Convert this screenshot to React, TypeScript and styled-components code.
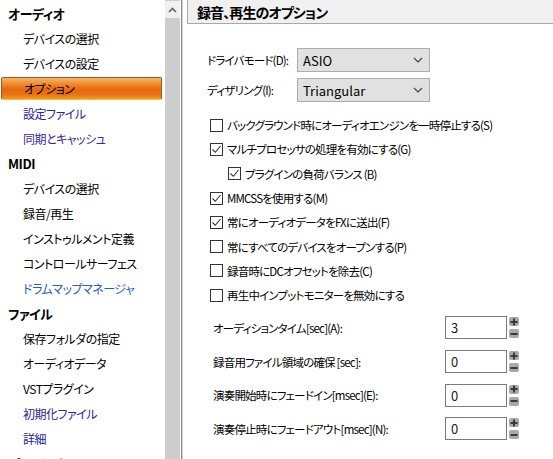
import React from 'react';
import styled, { createGlobalStyle, css } from 'styled-components';

const GlobalStyle = createGlobalStyle`
  html, body {
    margin: 0;
    padding: 0;
    background: #ffffff;
  }
  body {
    font-family: 'Noto Sans CJK JP', 'Noto Sans', sans-serif;
    font-size: 12px;
    color: #000;
    font-feature-settings: 'palt';
  }
`;

const Window = styled.div`
  display: flex;
  flex-direction: row;
  width: 553px;
  height: 459px;
  overflow: hidden;
`;

const Sidebar = styled.div`
  width: 165px;
  flex-shrink: 0;
  display: flex;
  flex-direction: column;
  padding-top: 1px;
  box-sizing: border-box;
  letter-spacing: -0.5px;
  white-space: nowrap;
`;

const NavHeading = styled.div`
  height: 25px;
  flex-shrink: 0;
  display: flex;
  align-items: center;
  padding-left: 8px;
  font-size: 13px;
  font-weight: bold;
`;

const NavItem = styled.div<{ $color?: string; $selected?: boolean }>`
  height: 25px;
  flex-shrink: 0;
  display: flex;
  align-items: center;
  padding-left: 23px;
  box-sizing: border-box;
  color: ${(p) => p.$color || '#000'};
  ${(p) =>
    p.$selected &&
    css`
      height: 23px;
      margin: 1px 3px 1px 1px;
      padding-left: 22px;
      border: 1px solid #9a5b1c;
      border-bottom-color: #f3c13a;
      border-radius: 2px;
      background: linear-gradient(
        to bottom,
        #f7b46e 0%,
        #f08a2a 30%,
        #e6680e 55%,
        #ea7414 80%,
        #f49a26 100%
      );
    `}
`;

const Scrollbar = styled.div`
  width: 15px;
  flex-shrink: 0;
  background: #cdcdcd;
  display: flex;
  flex-direction: column;
`;

const ScrollButton = styled.div`
  height: 17px;
  margin-top: 1px;
  background: #f0f0f0;
  display: flex;
  align-items: center;
  justify-content: center;
`;

const Divider = styled.div`
  width: 7px;
  flex-shrink: 0;
  background: linear-gradient(
    to right,
    #ffffff 0 1px,
    #8c8c8c 1px 2px,
    #d4d4d4 2px 3px,
    #ffffff 3px
  );
`;

const Main = styled.div`
  flex: 1;
  display: flex;
  flex-direction: column;
  white-space: nowrap;
`;

const Header = styled.div`
  height: 24px;
  box-sizing: border-box;
  background: #f0f0f0;
  border-left: 1px solid #a8a8a8;
  border-bottom: 1px solid #a8a8a8;
  display: flex;
  align-items: center;
  padding-left: 9px;
  font-size: 14px;
  font-weight: bold;
  letter-spacing: -0.9px;
`;

const Body = styled.div`
  display: flex;
  flex-direction: column;
  padding: 24px 0 0 20px;
  font-size: 11.5px;
  letter-spacing: -0.8px;
`;

const SelectRow = styled.div`
  display: grid;
  grid-template-columns: 90px 133px;
  align-items: center;
  height: 24px;
  & + & {
    margin-top: 6px;
  }
`;

const SelectBox = styled.div`
  height: 24px;
  box-sizing: border-box;
  border: 1px solid #adadad;
  background: #e1e1e1;
  display: flex;
  align-items: center;
  justify-content: space-between;
  padding: 0 6px 0 5px;
  font-size: 13px;
  letter-spacing: 0;
`;

const CheckList = styled.div`
  display: flex;
  flex-direction: column;
  margin-top: 11px;
  margin-left: 3px;
`;

const CheckRow = styled.div<{ $indent?: boolean }>`
  height: 24.3px;
  display: flex;
  align-items: center;
  gap: 4px;
  padding-left: ${(p) => (p.$indent ? '18px' : '0')};
`;

const Box = styled.div`
  width: 13px;
  height: 13px;
  flex-shrink: 0;
  box-sizing: border-box;
  border: 1px solid #333333;
  background: #fff;
  display: flex;
  align-items: center;
  justify-content: center;
`;

const SpinList = styled.div`
  display: flex;
  flex-direction: column;
  gap: 10.7px;
  margin-top: 9px;
  margin-left: 6px;
`;

const SpinRow = styled.div`
  display: grid;
  grid-template-columns: 232px 62px 12px;
  align-items: center;
  height: 23px;
`;

const NumberBox = styled.div`
  height: 23px;
  box-sizing: border-box;
  border: 1px solid #7a7a7a;
  display: flex;
  align-items: center;
  padding-left: 5px;
  font-size: 13px;
  letter-spacing: 0;
  color: #1a1a1a;
`;

const Spinner = styled.div`
  display: flex;
  flex-direction: column;
  gap: 3px;
  margin-left: 2px;
  width: 10px;
`;

const SpinButton = styled.div`
  height: 9px;
  border-radius: 2px;
  background: #a9a9a9;
  display: flex;
  align-items: center;
  justify-content: center;
`;

const Chevron = () => (
  <svg width="10" height="6" viewBox="0 0 10 6">
    <path d="M1 1 L5 5 L9 1" fill="none" stroke="#404040" strokeWidth="1.1" />
  </svg>
);

const UpArrow = () => (
  <svg width="9" height="6" viewBox="0 0 9 6">
    <path d="M1 5 L4.5 1.5 L8 5" fill="none" stroke="#606060" strokeWidth="1.6" />
  </svg>
);

const Check = () => (
  <svg width="11" height="11" viewBox="0 0 11 11">
    <path d="M1.5 5.5 L4.3 8.3 L9.5 2" fill="none" stroke="#333" strokeWidth="1.1" />
  </svg>
);

const Plus = () => (
  <svg width="8" height="8" viewBox="0 0 8 8">
    <path d="M4 0.5 V7.5 M0.5 4 H7.5" stroke="#3a3a3a" strokeWidth="2" />
  </svg>
);

const Minus = () => (
  <svg width="8" height="8" viewBox="0 0 8 8">
    <path d="M0.5 4 H7.5" stroke="#3a3a3a" strokeWidth="2" />
  </svg>
);

interface NavEntry {
  label: string;
  color?: string;
  selected?: boolean;
}

const nav: { title: string; items: NavEntry[] }[] = [
  {
    title: 'オーディオ',
    items: [
      { label: 'デバイスの選択' },
      { label: 'デバイスの設定' },
      { label: 'オプション', selected: true },
      { label: '設定ファイル', color: '#24249c' },
      { label: '同期とキャッシュ', color: '#3a2a9e' },
    ],
  },
  {
    title: 'MIDI',
    items: [
      { label: 'デバイスの選択' },
      { label: '録音/再生' },
      { label: 'インストゥルメント定義' },
      { label: 'コントロールサーフェス' },
      { label: 'ドラムマップマネージャ', color: '#2a5cc4' },
    ],
  },
  {
    title: 'ファイル',
    items: [
      { label: '保存フォルダの指定' },
      { label: 'オーディオデータ' },
      { label: 'VSTプラグイン' },
      { label: '初期化ファイル', color: '#26269a' },
      { label: '詳細', color: '#22229c' },
    ],
  },
  { title: 'プロジェクト', items: [] },
];

const checks = [
  { label: 'バックグラウンド時にオーディオエンジンを一時停止する(S)', checked: false },
  { label: 'マルチプロセッサの処理を有効にする(G)', checked: true },
  { label: 'プラグインの負荷バランス (B)', checked: true, indent: true },
  { label: 'MMCSSを使用する(M)', checked: true },
  { label: '常にオーディオデータをFXに送出(F)', checked: true },
  { label: '常にすべてのデバイスをオープンする(P)', checked: false },
  { label: '録音時にDCオフセットを除去(C)', checked: false },
  { label: '再生中インプットモニターを無効にする', checked: false },
];

const spins = [
  { label: 'オーディションタイム[sec](A):', value: '3' },
  { label: '録音用ファイル領域の確保 [sec]:', value: '0' },
  { label: '演奏開始時にフェードイン[msec](E):', value: '0' },
  { label: '演奏停止時にフェードアウト[msec](N):', value: '0' },
];

const App = () => {
  return (
    <>
      <GlobalStyle />
      <Window>
        <Sidebar>
          {nav.map((section) => (
            <React.Fragment key={section.title}>
              <NavHeading>{section.title}</NavHeading>
              {section.items.map((item, i) => (
                <NavItem
                  key={`${section.title}_${i}`}
                  $color={item.color}
                  $selected={item.selected}
                >
                  {item.label}
                </NavItem>
              ))}
            </React.Fragment>
          ))}
        </Sidebar>
        <Scrollbar>
          <ScrollButton>
            <UpArrow />
          </ScrollButton>
        </Scrollbar>
        <Divider />
        <Main>
          <Header>録音、再生のオプション</Header>
          <Body>
            <SelectRow>
              <span>ドライバモード(D):</span>
              <SelectBox>
                ASIO
                <Chevron />
              </SelectBox>
            </SelectRow>
            <SelectRow>
              <span>ディザリング(I):</span>
              <SelectBox>
                Triangular
                <Chevron />
              </SelectBox>
            </SelectRow>
            <CheckList>
              {checks.map((c) => (
                <CheckRow key={c.label} $indent={c.indent}>
                  <Box>{c.checked && <Check />}</Box>
                  <span>{c.label}</span>
                </CheckRow>
              ))}
            </CheckList>
            <SpinList>
              {spins.map((s) => (
                <SpinRow key={s.label}>
                  <span>{s.label}</span>
                  <NumberBox>{s.value}</NumberBox>
                  <Spinner>
                    <SpinButton>
                      <Plus />
                    </SpinButton>
                    <SpinButton>
                      <Minus />
                    </SpinButton>
                  </Spinner>
                </SpinRow>
              ))}
            </SpinList>
          </Body>
        </Main>
      </Window>
    </>
  );
};

export default App;
